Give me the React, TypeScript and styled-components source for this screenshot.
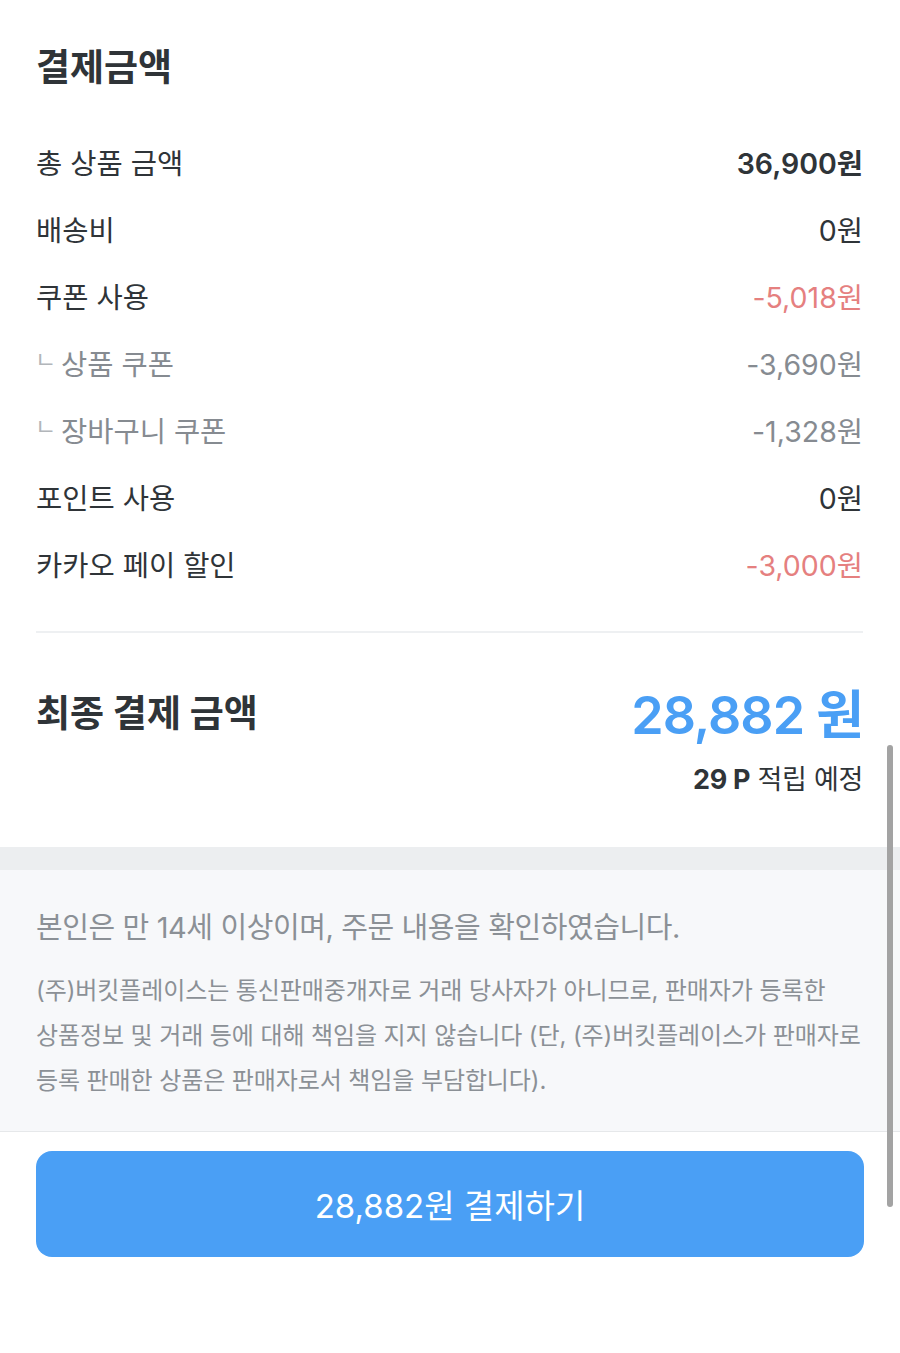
import styled, { createGlobalStyle } from "styled-components";

const GlobalStyle = createGlobalStyle`
  html, body {
    margin: 0;
    padding: 0;
    background: #ffffff;
  }
  body {
    font-family: "Inter", "Noto Sans CJK KR", "Noto Sans", sans-serif;
    -webkit-font-smoothing: antialiased;
  }
  * {
    box-sizing: border-box;
  }
`;

type Tone = "default" | "strong" | "red" | "sub";

interface PriceRow {
  label: string;
  value: string;
  tone: Tone;
  sub?: boolean;
}

const rows: PriceRow[] = [
  { label: "총 상품 금액", value: "36,900원", tone: "strong" },
  { label: "배송비", value: "0원", tone: "default" },
  { label: "쿠폰 사용", value: "-5,018원", tone: "red" },
  { label: "상품 쿠폰", value: "-3,690원", tone: "sub", sub: true },
  { label: "장바구니 쿠폰", value: "-1,328원", tone: "sub", sub: true },
  { label: "포인트 사용", value: "0원", tone: "default" },
  { label: "카카오 페이 할인", value: "-3,000원", tone: "red" }
];

const valueColor: Record<Tone, string> = {
  default: "#2f3438",
  strong: "#2f3438",
  red: "#e5807f",
  sub: "#868b91"
};

const App = () => {
  return (
    <Page>
      <GlobalStyle />
      <Summary>
        <Title>결제금액</Title>
        <RowList>
          {rows.map((row, i) => (
            <Row key={`row-${i}`}>
              <Label $sub={!!row.sub}>
                {row.sub && <Corner>ㄴ</Corner>}
                {row.label}
              </Label>
              <Value $tone={row.tone}>{row.value}</Value>
            </Row>
          ))}
        </RowList>
        <Divider />
        <TotalRow>
          <TotalLabel>최종 결제 금액</TotalLabel>
          <TotalValue>28,882 원</TotalValue>
        </TotalRow>
        <PointLine>
          <b>29 P</b> 적립 예정
        </PointLine>
      </Summary>

      <Band />

      <Notice>
        <Agree>본인은 만 14세 이상이며, 주문 내용을 확인하였습니다.</Agree>
        <Disclaimer>
          (주)버킷플레이스는 통신판매중개자로 거래 당사자가 아니므로, 판매자가 등록한
          <br />
          상품정보 및 거래 등에 대해 책임을 지지 않습니다 (단, (주)버킷플레이스가 판매자로
          <br />
          등록 판매한 상품은 판매자로서 책임을 부담합니다).
        </Disclaimer>
      </Notice>

      <Footer>
        <PayButton type="button">28,882원 결제하기</PayButton>
      </Footer>

      <ScrollThumb />
    </Page>
  );
};

const Page = styled.div`
  position: relative;
  width: 900px;
  min-height: 1353px;
  background: #ffffff;
  overflow: hidden;
  color: #2f3438;
`;

const Summary = styled.section`
  padding: 40px 37px 49px 36px;
`;

const Title = styled.h2`
  margin: 0;
  font-size: 37px;
  line-height: 56px;
  font-weight: 700;
  color: #2f3438;
`;

const RowList = styled.div`
  display: flex;
  flex-direction: column;
  margin-top: 32px;
`;

const Row = styled.div`
  display: flex;
  align-items: center;
  justify-content: space-between;
  height: 67px;
`;

const Label = styled.span<{ $sub: boolean }>`
  display: flex;
  align-items: center;
  font-size: 28.5px;
  color: ${({ $sub }) => ($sub ? "#868b91" : "#2f3438")};
`;

const Corner = styled.span`
  flex-shrink: 0;
  width: 26px;
  overflow: visible;
  white-space: nowrap;
  font-size: 23px;
  line-height: 1;
  color: #b2b6ba;
  margin-top: -5px;
  margin-left: -1px;
`;

const Value = styled.span<{ $tone: Tone }>`
  font-size: 28.5px;
  font-weight: ${({ $tone }) => ($tone === "strong" ? 600 : 400)};
  color: ${({ $tone }) => valueColor[$tone]};
`;

const Divider = styled.hr`
  margin: 34px 0 0;
  border: none;
  height: 2px;
  background: #eef0f2;
`;

const TotalRow = styled.div`
  display: flex;
  align-items: center;
  justify-content: space-between;
  height: 80px;
  margin-top: 38px;
`;

const TotalLabel = styled.span`
  font-size: 37px;
  font-weight: 700;
  color: #2f3438;
`;

const TotalValue = styled.span`
  font-size: 52px;
  font-weight: 600;
  letter-spacing: -1px;
  color: #4a9ff5;
`;

const PointLine = styled.div`
  margin-top: 11px;
  text-align: right;
  font-size: 27px;
  line-height: 36px;
  letter-spacing: -0.3px;
  color: #2f3438;

  b {
    font-weight: 700;
  }
`;

const Band = styled.div`
  height: 23px;
  background: #eceef0;
`;

const Notice = styled.section`
  background: #f7f8fa;
  padding: 38px 36px 28px;
  border-bottom: 1px solid #e6e8ea;
  color: #8b9096;
`;

const Agree = styled.p`
  margin: 0;
  font-size: 29px;
  line-height: 40px;
  letter-spacing: -0.4px;
`;

const Disclaimer = styled.p`
  margin: 20px 0 0;
  font-size: 24px;
  line-height: 45px;
  letter-spacing: -0.1px;
  white-space: nowrap;
`;

const Footer = styled.div`
  padding: 19px 36px 0;
`;

const PayButton = styled.button`
  display: flex;
  align-items: center;
  justify-content: center;
  width: 100%;
  height: 106px;
  border: none;
  border-radius: 16px;
  background: #4a9ff5;
  color: #ffffff;
  font-family: "Inter", "Noto Sans CJK KR", sans-serif;
  font-size: 33px;
  cursor: pointer;
`;

const ScrollThumb = styled.div`
  position: absolute;
  top: 745px;
  right: 7px;
  width: 6px;
  height: 462px;
  border-radius: 3px;
  background: #a3a3a3;
`;

export default App;
